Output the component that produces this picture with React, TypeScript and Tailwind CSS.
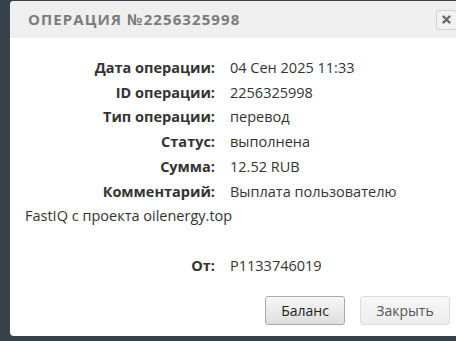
import React from "react"

const rows: [string, string][] = [
  ["Дата операции:", "04 Сен 2025 11:33"],
  ["ID операции:", "2256325998"],
  ["Тип операции:", "перевод"],
  ["Статус:", "выполнена"],
  ["Сумма:", "12.52 RUB"],
  ["Комментарий:", "Выплата пользователю"],
]

function Row({ label, children }: { label: string; children: React.ReactNode }) {
  return (
    <div className="leading-[24.7px]">
      <span className="inline-block w-[190px] text-right font-bold text-[#333]">{label}</span>
      <span className="ml-[15px] text-[#333]">{children}</span>
    </div>
  )
}

export default function App() {
  return (
    <div className="w-[456px] h-[341px] overflow-hidden bg-[#37434b] pl-[10px] pt-[1px]">
      <div className="w-[462px] rounded-[4px] bg-white overflow-hidden">
        {/* Header */}
        <div className="h-[37px] bg-[#efefef] flex items-center justify-between pl-[18px] pr-[15px]">
          <span
            className="text-[15px] font-bold uppercase tracking-[1.1px] text-[#7b7b7b]"
            style={{ fontFamily: '"Open Sans", sans-serif' }}
          >
            Операция №2256325998
          </span>
          <button className="w-[21px] h-[20px] rounded-[3px] border border-[#d0d0d0] bg-[#f2f2f2] flex items-center justify-center">
            <svg width="9" height="9" viewBox="0 0 9 9">
              <path d="M1.5 1.5 L7.5 7.5 M7.5 1.5 L1.5 7.5" stroke="#666" strokeWidth="2.4" strokeLinecap="round" />
            </svg>
          </button>
        </div>

        {/* Body */}
        <div
          className="pt-[18px] pl-[15px] w-[420px] text-[14.5px]"
          style={{ fontFamily: '"Open Sans", sans-serif' }}
        >
          {rows.map(([l, v]) => (
            <Row key={l} label={l}>
              {v}
            </Row>
          ))}
          {/* comment continues on the next line, flush left */}
          <div className="leading-[24.7px] text-[#333]">FastIQ с проекта oilenergy.top</div>
          <div className="h-[24.7px]" />
          <Row label="От:">P1133746019</Row>
        </div>

        {/* Footer */}
        <div
          className="flex gap-[15px] pl-[255px] pt-[18px] pb-[11px] text-[14px]"
          style={{ fontFamily: '"Open Sans", sans-serif' }}
        >
          <button className="w-[80px] h-[29px] rounded-[3px] border border-[#a9a9a9] bg-gradient-to-b from-[#f7f7f7] to-[#dedede] text-[#222]">
            Баланс
          </button>
          <button className="w-[90px] h-[29px] rounded-[3px] border border-[#dcdcdc] bg-gradient-to-b from-[#f8f8f8] to-[#ececec] text-[#555]">
            Закрыть
          </button>
        </div>
      </div>
    </div>
  )
}
